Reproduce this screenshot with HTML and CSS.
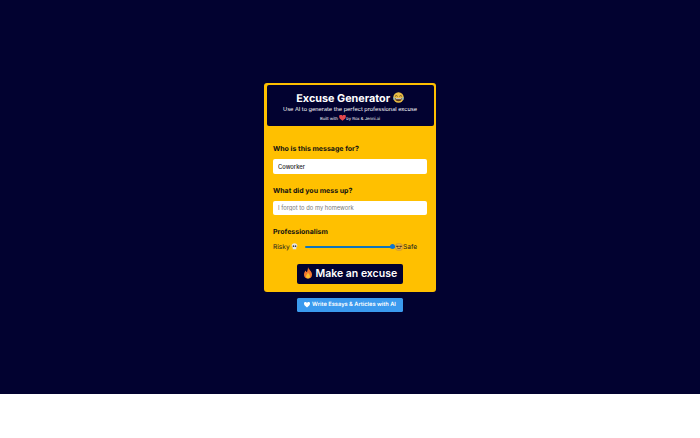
FILE: index.html
```html
<!DOCTYPE html>
<html lang="en">
<head>
<meta charset="utf-8">
<title>Excuse Generator</title>
<link rel="stylesheet" href="styles.css">
</head>
<body>
<main class="page">
  <section class="card">
    <header class="head">
      <h1 class="title">Excuse Generator
        <svg class="emoji-title" viewBox="0 0 20 20"><circle cx="10" cy="10" r="9.500" fill="#e9bd45"/><path d="M3.500 8q2.500-3 5 0M11.500 8q2.500-3 5 0" stroke="#6b4a1a" stroke-width="1.600" fill="none"/><path d="M4 11h12q0 6-6 6t-6-6z" fill="#5a3a20"/><path d="M5 11.500h10v1.500H5z" fill="#fff"/><path d="M1 8q2 1 3 5-2 2-3.500 0zM19 8q-2 1-3 5 2 2 3.500 0z" fill="#7fb2c9"/></svg>
      </h1>
      <p class="sub">Use AI to generate the perfect professional excuse</p>
      <p class="credit">Built with
        <svg class="emoji-heart" viewBox="0 0 20 18"><path d="M10 17C3 12 0 9 0 5a5 5 0 0 1 10-1.500A5 5 0 0 1 20 5c0 4-3 7-10 12z" fill="#e5484d"/></svg>by Rox &amp; Jenni.ai</p>
    </header>
    <form class="form">
      <label class="label" for="who">Who is this message for?</label>
      <input class="field" id="who" value="Coworker">
      <label class="label" for="what">What did you mess up?</label>
      <input class="field" id="what" placeholder="I forgot to do my homework">
      <div class="label">Professionalism</div>
      <div class="range-row">
        <span>Risky</span>
        <svg class="emoji-small" viewBox="0 0 20 20"><path d="M10 1c5 0 8 3 8 7 0 3-2 4-3 5v5H5v-5c-1-1-3-2-3-5 0-4 3-7 8-7z" fill="#e6e6ea"/><circle cx="7" cy="9" r="2.400" fill="#444"/><circle cx="13" cy="9" r="2.400" fill="#444"/></svg>
        <div class="track"><div class="thumb"></div></div>
        <svg class="emoji-small tight" viewBox="0 0 20 20"><circle cx="10" cy="10" r="9.500" fill="#e9b23a" stroke="#b8862a"/><path d="M3 7h6v3H3zM11 7h6v3h-6z" fill="#5a3a20"/><path d="M5 12q5 5 10 0" stroke="#5a3a20" stroke-width="1.800" fill="none"/></svg>
        <span>Safe</span>
      </div>
      <button class="make" type="button">
        <svg class="emoji-fire" viewBox="0 0 20 24"><path d="M10 0c1 5 8 8 8 15a8 8 0 0 1-16 0c0-4 2-6 3-8 1 2 2 3 3 3 1-3 2-6 2-10z" fill="#f4772e"/><path d="M10 11c1 3 4 4 4 8a4 4 0 0 1-8 0c0-3 3-5 4-8z" fill="#fbc02d"/></svg>
        Make an excuse
      </button>
    </form>
  </section>
  <a class="promo" href="#">
    <svg class="emoji-promo" viewBox="0 0 20 18"><path d="M10 17C3 12 0 9 0 5a5 5 0 0 1 10-1.500A5 5 0 0 1 20 5c0 4-3 7-10 12z" fill="#fff"/></svg>
    Write Essays &amp; Articles with AI
  </a>
</main>
</body>
</html>
```
FILE: styles.css
```css
* { box-sizing: border-box; }
html, body { margin: 0; background: #fff; }
body { font-family: Inter, "Liberation Sans", sans-serif; text-rendering: geometricPrecision; }
.page {
  height: 394px;
  background: #020230;
  display: flex;
  flex-direction: column;
  align-items: center;
  justify-content: center;
  gap: 6px;
}
.card {
  width: 172px;
  height: 209px;
  background: #ffc000;
  border-radius: 3px;
  padding: 2.500px;
}
.head {
  height: 41px;
  background: #020230;
  border-radius: 2px;
  color: #fff;
  text-align: center;
  padding-top: 6.500px;
}
.title {
  margin: 0;
  font-size: 10.800px;
  line-height: 14px;
  font-weight: 700;
}
.emoji-title { width: 11px; height: 11px; vertical-align: -1.500px; }
.sub { margin: 0; font-size: 5.600px; line-height: 8px; }
.credit { margin: 1px 0 0; font-size: 4.200px; line-height: 6px; }
.emoji-heart { width: 7px; height: 6px; vertical-align: -1px; }
.form { padding: 0 6.500px; display: flex; flex-direction: column; }
.label {
  font-size: 7px;
  line-height: 10px;
  font-weight: 700;
  color: #111;
  margin-top: 12px;
}
.form > .label:first-child { margin-top: 18px; }
.field {
  margin-top: 5px;
  height: 14.500px;
  width: 100%;
  border: 0;
  border-radius: 2px;
  background: #fff;
  padding: 0 5px;
  font: 500 5.800px Inter, "Liberation Sans", sans-serif;
  color: #222;
}
.field::placeholder { color: #777; opacity: 1; font-weight: 400; }
.range-row {
  margin-top: 5px;
  height: 9px;
  padding-right: 10px;
  display: flex;
  align-items: center;
  font-size: 6.600px;
  color: #222;
}
.emoji-small { width: 7px; height: 7px; margin-left: 1px; flex: none; }
.emoji-small.tight { width: 8px; height: 8px; margin-left: 0; }
.track {
  flex: 1;
  height: 2px;
  margin-left: 7px;
  background: #0f75bd;
  border-radius: 1px;
  position: relative;
}
.thumb {
  position: absolute;
  right: 0;
  top: -1.500px;
  width: 5px;
  height: 5px;
  border-radius: 50%;
  background: #0f75d0;
}
.make {
  align-self: center;
  margin-top: 13px;
  width: 106.600px;
  height: 19.500px;
  background: #020230;
  color: #fff;
  border: 0;
  border-radius: 2px;
  font: 600 10.500px/19.500px Inter, "Liberation Sans", sans-serif;
  padding: 0;
  white-space: nowrap;
}
.emoji-fire { width: 10px; height: 12px; vertical-align: -2px; }
.promo {
  width: 106.600px;
  height: 14px;
  background: #3b9aee;
  border-radius: 1.500px;
  color: #fff;
  text-decoration: none;
  font-size: 5.700px;
  font-weight: 600;
  display: flex;
  align-items: center;
  justify-content: center;
  gap: 2px;
  white-space: nowrap;
}
.emoji-promo { width: 6px; height: 6px; }
```
